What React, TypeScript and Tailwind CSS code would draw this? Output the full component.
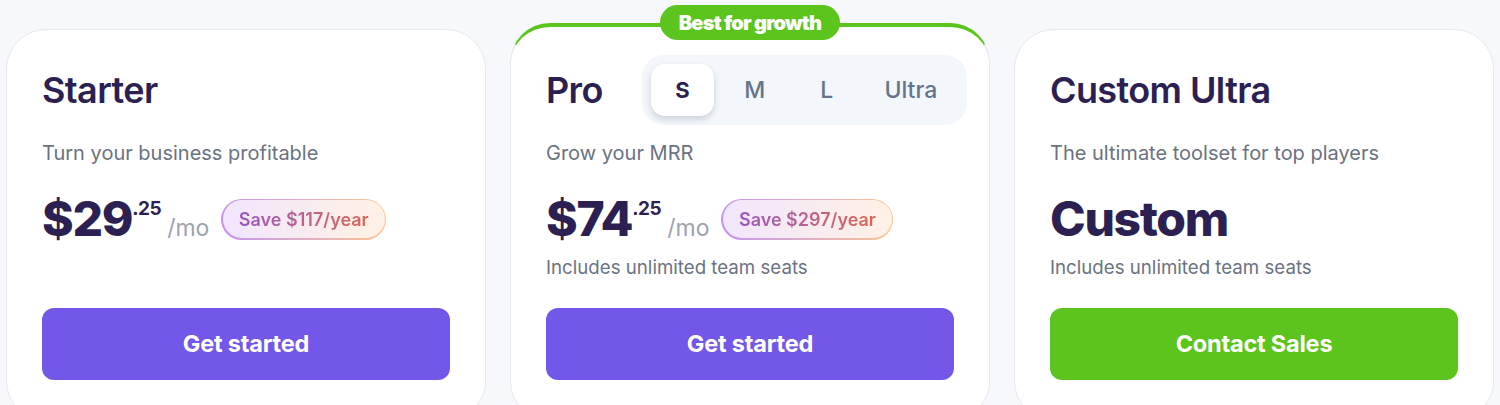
import React from "react";

const titleCls = "text-[36px] font-semibold leading-[44px] text-[#2c1f52] tracking-[-0.6px]";
const subCls = "mt-[14px] text-[20px] leading-[28px] text-[#6b7280]";
const incCls = "mt-[7px] text-[18.7px] leading-[28px] text-[#6b7280]";

function SaveBadge({ text }: { text: string }) {
  return (
    <div className="ml-[12px] rounded-full p-[1.5px] bg-gradient-to-r from-[#c593f0] to-[#fcc48e]">
      <div className="flex h-[38px] items-center rounded-full bg-gradient-to-r from-[#f1e6fd] to-[#fff1e4] px-[16px]">
        <span className="bg-gradient-to-r from-[#9a55be] to-[#dc6651] bg-clip-text text-[18px] font-semibold text-transparent">
          {text}
        </span>
      </div>
    </div>
  );
}

function Price({ whole, save }: { whole: string; save: string }) {
  return (
    <div className="mt-[24px] flex h-[56px] items-center">
      <div className="flex items-baseline text-[#2c1f52]">
        <span className="text-[48px] font-extrabold leading-none tracking-[-1.3px]">{whole}</span>
        <span className="relative top-[-21px] text-[19px] font-bold leading-none tracking-[-0.5px]">.25</span>
        <span className="ml-[6px] text-[23px] leading-none text-[#9ca3af]">/mo</span>
      </div>
      <SaveBadge text={save} />
    </div>
  );
}

function Btn({ label, green }: { label: string; green?: boolean }) {
  return (
    <button
      className={
        "mt-[26px] flex h-[72px] w-full items-center justify-center rounded-[12px] text-[23.5px] font-bold tracking-[-0.2px] text-white " +
        (green ? "bg-[#5bc41d]" : "bg-[#7257e8]")
      }
    >
      {label}
    </button>
  );
}

export default function App() {
  return (
    <div
      className="flex min-h-[405px] w-full items-start gap-6 overflow-hidden bg-[#f7f8fc] px-[6px] pt-[23px]"
      style={{ fontFamily: "Inter, 'Noto Sans', sans-serif" }}
    >
      {/* Starter */}
      <div className="mt-[6px] w-[480px] shrink-0 rounded-[40px] border border-[#e6e8ef] bg-white px-[35px] pb-10 pt-[25px]">
        <div className="flex h-[70px] items-center">
          <h2 className={titleCls}>Starter</h2>
        </div>
        <p className={subCls}>Turn your business profitable</p>
        <Price whole="$29" save="Save $117/year" />
        <p className={incCls + " invisible"}>Includes unlimited team seats</p>
        <Btn label="Get started" />
      </div>

      {/* Pro */}
      <div className="relative w-[480px] shrink-0 rounded-[40px] border border-t-4 border-[#e6e8ef] border-t-[#5bc41d] bg-white px-[35px] pb-10 pt-[28px]">
        <div className="absolute left-1/2 top-[-22px] flex h-[35px] w-[180px] -translate-x-1/2 items-center justify-center rounded-full bg-[#5bc41d]">
          <span className="text-[20px] font-black tracking-[-0.8px] text-white">Best for growth</span>
        </div>
        <div className="flex h-[70px] items-center">
          <h2 className={titleCls}>Pro</h2>
          <div className="ml-[39px] flex h-[70px] items-center rounded-[22px] bg-[#f3f6fb] pl-[9px] pr-[3px]">
            <div className="flex h-[52px] w-[63px] items-center justify-center rounded-[14px] bg-white text-[22px] font-bold text-[#2c1f52] shadow-[0_3px_6px_rgba(30,30,60,0.18)]">
              S
            </div>
            <div className="flex h-[52px] w-[82px] items-center justify-center text-[23px] font-medium text-[#64748b]">M</div>
            <div className="flex h-[52px] w-[62px] items-center justify-center text-[23px] font-medium text-[#64748b]">L</div>
            <div className="flex h-[52px] w-[106px] items-center justify-center text-[23px] font-medium text-[#64748b]">Ultra</div>
          </div>
        </div>
        <p className={subCls}>Grow your MRR</p>
        <Price whole="$74" save="Save $297/year" />
        <p className={incCls}>Includes unlimited team seats</p>
        <Btn label="Get started" />
      </div>

      {/* Custom Ultra */}
      <div className="mt-[6px] w-[480px] shrink-0 rounded-[40px] border border-[#e6e8ef] bg-white px-[35px] pb-10 pt-[25px]">
        <div className="flex h-[70px] items-center">
          <h2 className={titleCls}>Custom Ultra</h2>
        </div>
        <p className={subCls}>The ultimate toolset for top players</p>
        <div className="mt-[24px] flex h-[56px] items-center">
          <span className="text-[48px] font-extrabold leading-none tracking-[-1.3px] text-[#2c1f52]">Custom</span>
        </div>
        <p className={incCls}>Includes unlimited team seats</p>
        <Btn label="Contact Sales" green />
      </div>
    </div>
  );
}
